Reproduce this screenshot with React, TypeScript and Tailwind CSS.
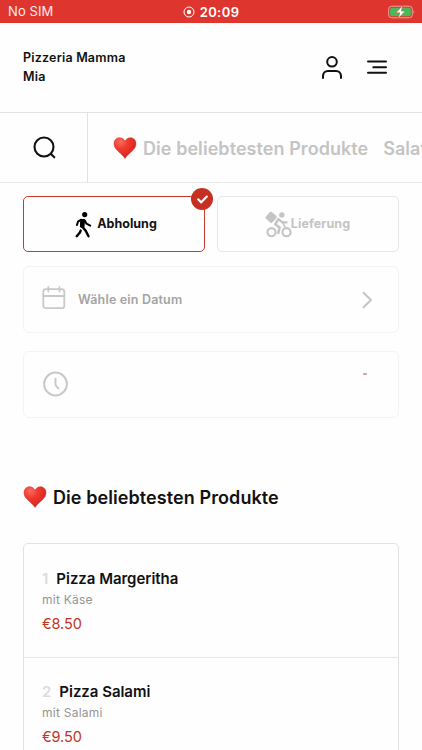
import { FaCheck } from 'react-icons/fa'

const products = [
  { id: 1, name: 'Pizza Margeritha', description: 'mit Käse', price: '€8.50' },
  { id: 2, name: 'Pizza Salami', description: 'mit Salami', price: '€9.50' },
]

function Heart() {
  return (
    <svg width="24" height="24" viewBox="0 0 24 24" className="shrink-0">
      <defs>
        <radialGradient id="heart" cx="0.3" cy="0.2" r="0.85">
          <stop offset="0" stopColor="#fb6a5a" />
          <stop offset="0.4" stopColor="#f03a30" />
          <stop offset="1" stopColor="#cf2220" />
        </radialGradient>
      </defs>
      <path
        fill="url(#heart)"
        stroke="#c9302a"
        strokeWidth="0.500"
        d="M12 22.600C10.700 20.300 8 18 5.300 15.500C2.500 12.900 1 10.700 1 7.500C1 4.200 3.400 1.700 6.500 1.700C9 1.700 11.200 3.200 12 5.500C12.800 3.200 15 1.700 17.500 1.700C20.600 1.700 23 4.200 23 7.500C23 10.700 21.500 12.900 18.700 15.500C16 18 13.300 20.300 12 22.600Z"
      />
    </svg>
  )
}

function StatusBar() {
  return (
    <div className="relative flex h-[23px] items-center justify-between bg-[#de352e] pr-[7px] pl-2 text-white">
      <span className="text-[13px] leading-[23px] tracking-[0.1px] text-white/90">No SIM</span>
      <div className="absolute inset-x-0 flex h-[23px] items-center justify-center gap-[5px]">
        <svg width="12" height="12" viewBox="0 0 12 12" fill="none">
          <circle cx="6" cy="6" r="5" stroke="white" strokeWidth="1" />
          <circle cx="6" cy="6" r="2.200" fill="white" />
        </svg>
        <span className="pt-px text-[13px] leading-[22px] font-semibold tracking-[0.4px]">20:09</span>
      </div>
      <svg width="27" height="14" viewBox="0 0 27 14" fill="none">
        <rect x="0.700" y="1.200" width="23.600" height="11.600" rx="3" stroke="#f0a09c" />
        <rect x="2.200" y="2.700" width="20.600" height="8.600" rx="1.700" fill="#43bd57" />
        <path d="M25.500 5.300C26.600 5.800 26.600 8.200 25.500 8.700Z" fill="#f0a09c" />
        <path d="M14.800 0.500L7.800 7.800H11.800L10.200 13.500L17.300 6.100H13.300Z" fill="white" stroke="#de352e" strokeWidth="0.500" />
      </svg>
    </div>
  )
}

function Header() {
  return (
    <header className="flex h-[90px] items-center justify-between border-b-[1.500px] border-[#e2e2e2] pr-[34px] pl-[23px]">
      <h1 className="-mt-px w-[120px] text-[12.500px] leading-[19px] font-semibold tracking-[0.2px]">
        Pizzeria Mamma Mia
      </h1>
      <div className="flex items-center gap-[23px]">
        <svg width="22" height="24" viewBox="0 0 22 24" fill="none" stroke="currentColor" strokeWidth="2" strokeLinecap="round">
          <circle cx="11" cy="5.800" r="4.800" />
          <path d="M2 22V20.300C2 17.300 4 15 7 15H15C18 15 20 17.300 20 20.300V22" />
        </svg>
        <svg width="22" height="24" viewBox="0 0 22 24" fill="none" stroke="currentColor" strokeWidth="2" strokeLinecap="round">
          <path d="M2 5.500H20M7.300 11.200H20M2 16.700H20" />
        </svg>
      </div>
    </header>
  )
}

function CategoryBar() {
  return (
    <nav className="flex h-[70px] overflow-hidden border-b-[1.500px] border-[#e9e9e9]">
      <button className="flex w-[88px] shrink-0 items-center justify-center border-r border-[#e2e2e2]">
        <svg width="24" height="24" viewBox="0 0 24 24" fill="none" stroke="currentColor" strokeWidth="2.100" strokeLinecap="round" className="ml-[3px]">
          <circle cx="11" cy="11" r="9.500" />
          <path d="M18 18L21.300 21.300" />
        </svg>
      </button>
      <div className="flex items-center pt-px pl-[25px] text-[18px] font-semibold whitespace-nowrap text-[#c4c4c4]">
        <Heart />
        <span className="ml-[6px] tracking-[0.06px]">Die beliebtesten Produkte</span>
        <span className="ml-[15px]">Salate</span>
      </div>
    </nav>
  )
}

function WalkingIcon() {
  return (
    <svg width="17" height="27" viewBox="0 0 17 27" fill="none" stroke="black" strokeWidth="2.400" strokeLinecap="round" strokeLinejoin="round" className="shrink-0">
      <circle cx="9.700" cy="3.600" r="2.600" fill="black" stroke="none" />
      <path d="M6.300 9L9 9L8.400 16L6 15.500Z" fill="black" strokeWidth="2.200" />
      <path d="M6.200 8.700L3 10.700L1.900 14" strokeWidth="2" />
      <path d="M9.800 9.500L11.500 12.700L15.200 14.600" strokeWidth="2" />
      <path d="M5.700 19.600L4.900 21.500L1.700 25.200" />
      <path d="M7.500 16L10.700 19.800L13.500 25.200" />
    </svg>
  )
}

function CourierIcon() {
  return (
    <svg width="27" height="27" viewBox="0 0 27 27" fill="none" stroke="currentColor" strokeLinecap="round" strokeLinejoin="round" className="shrink-0">
      <rect x="1.700" y="1.900" width="8.800" height="8.800" rx="1.300" transform="rotate(42 6.100 6.300)" fill="currentColor" stroke="none" />
      <circle cx="16.800" cy="4" r="2.700" fill="currentColor" stroke="none" />
      <circle cx="6.500" cy="21.200" r="4.100" strokeWidth="2.100" />
      <circle cx="21.500" cy="21.200" r="4.100" strokeWidth="2.100" />
      <path d="M13.400 8.300L10.200 13.200L14.600 16.600L13.300 22" strokeWidth="2.500" />
      <path d="M13.600 8.300L17.500 11.400H21.500" strokeWidth="2.300" />
      <path d="M18 12L20.500 17" strokeWidth="1.600" />
    </svg>
  )
}

export default function App() {
  return (
    <div className="h-[750px] w-[422px] overflow-hidden bg-[#fefefe] font-['Inter',sans-serif] text-[#111111]">
      <StatusBar />
      <Header />
      <CategoryBar />
      <main className="px-[23px] pt-[13px]">
        <div className="grid grid-cols-2 gap-3">
          <button className="relative flex h-14 items-center justify-center gap-[5px] rounded-[5px] border-[1.500px] border-[#c93a2e] pl-1">
            <WalkingIcon />
            <span className="text-[12.500px] font-bold tracking-[0.02px]">Abholung</span>
            <span className="absolute -top-[9px] -right-[9px] flex size-[22px] items-center justify-center rounded-full bg-[#c53023]">
              <FaCheck className="size-[11px] text-white" />
            </span>
          </button>
          <button className="flex h-14 items-center justify-center rounded-[5px] border border-[#e6e6e6] pr-px text-[#c4c4c4]">
            <CourierIcon />
            <span className="-ml-px text-[12.500px] font-bold tracking-[0.1px]">Lieferung</span>
          </button>
        </div>

        <div className="mt-[14px] flex h-[67px] items-center rounded-[6px] border border-[#f3f3f3] pr-[25px] pl-[18px]">
          <svg width="24" height="24" viewBox="0 0 24 24" fill="none" stroke="#c9c9c9" strokeWidth="1.800" strokeLinecap="round" className="-mt-[3px]">
            <rect x="1.300" y="3.200" width="21" height="19" rx="2.500" />
            <path d="M1.300 10H22.300M6.300 1V5.500M17.500 1V5.500" />
          </svg>
          <span className="ml-3 flex-1 pt-px text-[12.500px] font-semibold tracking-[0.18px] text-[#a3a3a3]">Wähle ein Datum</span>
          <svg width="12" height="18" viewBox="0 0 12 18" fill="none" stroke="#c6c6c6" strokeWidth="2.100" strokeLinecap="round" strokeLinejoin="round">
            <path d="M2.500 1.800L10 9L2.500 16.200" />
          </svg>
        </div>

        <div className="mt-[18px] flex h-[67px] items-center justify-between rounded-[6px] border border-[#f3f3f3] pr-[31px] pl-[18px]">
          <svg width="26" height="26" viewBox="0 0 26 26" fill="none" stroke="#c9c9c9" strokeWidth="2" strokeLinecap="round" className="-mt-px">
            <circle cx="13.500" cy="13" r="11.400" />
            <path d="M13.500 7.800V13.200C13.500 15 14.800 15.800 16.500 17.400" />
          </svg>
          <span className="mb-[21px] h-[2px] w-[4px] rounded-full bg-[#cf9f99]" />
        </div>

        <h2 className="mt-[66px] flex h-[26px] items-center text-[18px] font-semibold">
          <Heart />
          <span className="ml-[6px] tracking-[0.08px] whitespace-nowrap">Die beliebtesten Produkte</span>
        </h2>

        <div className="mt-[33px] rounded-t-[5px] border border-[#e2e2e2]">
          {products.map((product) => (
            <div key={product.id} className="h-[113.500px] border-b-[1.500px] border-[#e6e6e6] px-[18px] pt-[24.500px]">
              <h3 className="flex h-[21px] items-center gap-2 text-[15px] font-semibold">
                <span className="text-[#dcdcdc]">{product.id}</span>
                <span className="tracking-[-0.03px]">{product.name}</span>
              </h3>
              <p className="text-[12px] leading-[19px] tracking-[0.25px] text-[#949494]">{product.description}</p>
              <p className="mt-[4px] text-[14.500px] leading-[21px] tracking-[-0.1px] text-[#c23428]">{product.price}</p>
            </div>
          ))}
        </div>
      </main>
    </div>
  )
}
